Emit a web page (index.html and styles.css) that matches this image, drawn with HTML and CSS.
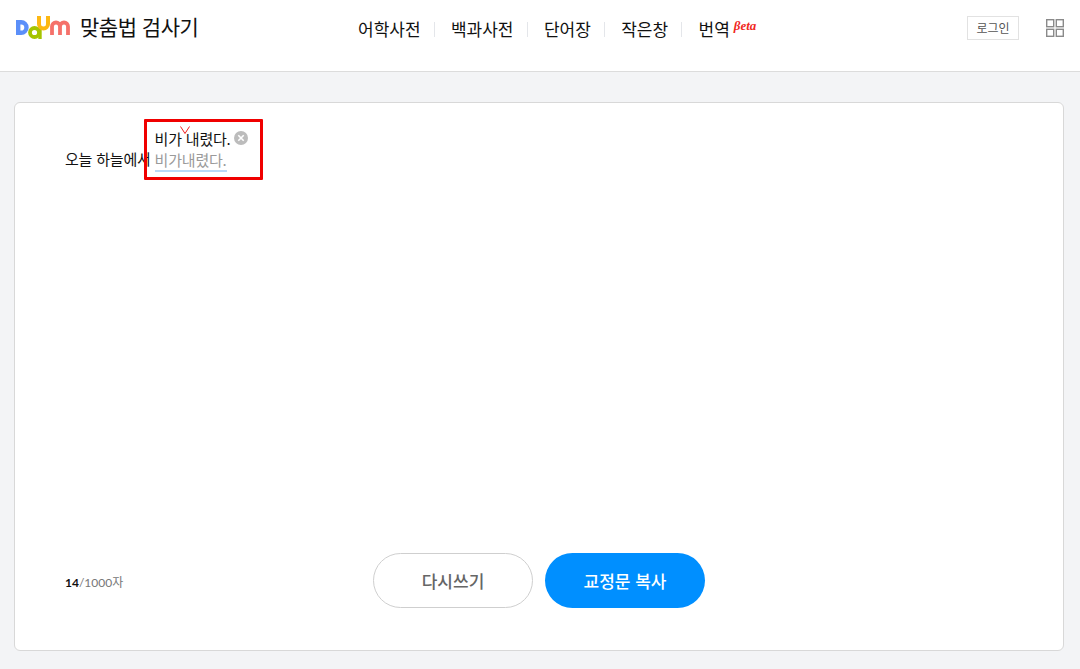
FILE: index.html
```html
<!DOCTYPE html>
<html lang="ko">
<head>
    <meta charset="UTF-8">
    <title>맞춤법 검사기</title>
    <link rel="stylesheet" href="styles.css">
</head>
<body>
    <header class="header">
        <div class="brand">
            <svg class="logo" width="56" height="26" viewBox="0 0 56 26" fill="none">
                <path d="M2.2 8.2h3a5.3 5.3 0 0 1 0 10.6h-3z" stroke="#5b8ff9" stroke-width="4.4"/>
                <circle cx="18.5" cy="18.5" r="4.5" stroke="#a5c400" stroke-width="3.8"/>
                <path d="M24 13v12" stroke="#a5c400" stroke-width="3.4"/>
                <path d="M23 2v8a4.5 4.5 0 0 0 9 0V2" stroke="#fdb813" stroke-width="4"/>
                <path d="M36 21V12.5a4 4 0 0 1 8 0V21M44 12.5a4 4 0 0 1 8 0V21" stroke="#f5716a" stroke-width="3.8"/>
            </svg>
            <h1 class="brand-title">맞춤법 검사기</h1>
        </div>
        <nav class="nav">
            <a class="nav-item">어학사전</a>
            <a class="nav-item">백과사전</a>
            <a class="nav-item">단어장</a>
            <a class="nav-item">작은창</a>
            <a class="nav-item">번역<em class="beta">βeta</em></a>
        </nav>
        <div class="util">
            <a class="login">로그인</a>
            <svg class="apps" width="18" height="18" viewBox="0 0 18 18" fill="none" stroke="#8a8a8a" stroke-width="1.4">
                <rect x="0.7" y="0.7" width="7" height="7"/>
                <rect x="10.3" y="0.7" width="7" height="7"/>
                <rect x="0.7" y="10.3" width="7" height="7"/>
                <rect x="10.3" y="10.3" width="7" height="7"/>
            </svg>
        </div>
    </header>

    <main class="main">
        <section class="card">
            <div class="result">
                <span class="plain">오늘 하늘에서</span>
                <div class="correction">
                    <div class="fixed">
                        <span>비가 내렸다.</span>
                        <svg class="clear" width="14" height="14" viewBox="0 0 14 14">
                            <circle cx="7" cy="7" r="7" fill="#bcbcbc"/>
                            <path d="M4.3 4.3l5.4 5.4M9.7 4.3L4.3 9.7" stroke="#fff" stroke-width="1.6"/>
                        </svg>
                    </div>
                    <div class="original">비가내렸다.</div>
                    <svg class="caret" width="10" height="8" viewBox="0 0 10 8" fill="none">
                        <path d="M0.5 0.5L5 7.5L9.5 0.5" stroke="#f01e1e"/>
                    </svg>
                    <div class="highlight"></div>
                </div>
            </div>
            <div class="card-foot">
                <div class="count"><b>14</b>/1000자</div>
                <div class="actions">
                    <button class="btn btn-reset">다시쓰기</button>
                    <button class="btn btn-copy">교정문 복사</button>
                </div>
            </div>
        </section>
    </main>
</body>
</html>
```

FILE: styles.css
```css
* {
    box-sizing: border-box;
}
body {
    margin: 0;
    height: 669px;
    overflow: hidden;
    background-color: #f3f4f6;
    color: #111;
    font-family: "Noto Sans CJK KR", "Noto Sans", sans-serif;
}
.header {
    display: flex;
    justify-content: space-between;
    height: 72px;
    padding: 0 16px;
    background-color: #fff;
    border-bottom: 1px solid #dcdcdc;
}
.brand {
    display: flex;
    align-items: flex-start;
    padding-top: 14px;
    width: 342px;
}
.logo {
    margin-right: 8px;
}
.brand-title {
    margin: -2px 0 0;
    font-size: 21px;
    line-height: 28px;
    font-weight: 400;
    letter-spacing: -0.5px;
}
.nav {
    display: flex;
    align-items: flex-start;
    padding-top: 17px;
    flex: 1;
}
.nav-item {
    display: flex;
    font-size: 17px;
    line-height: 24px;
    padding-right: 14px;
    margin-right: 16.4px;
    background: linear-gradient(#e4e6ea, #e4e6ea) right 5px / 1px 15px no-repeat;
}
.nav-item:last-child {
    background: none;
    margin-right: 0;
}
.beta {
    margin: -3px 0 0 4px;
    color: #f0281e;
    font-family: "Liberation Serif", serif;
    font-size: 13px;
    font-weight: 700;
    font-style: italic;
}
.util {
    display: flex;
    align-items: flex-start;
    padding-top: 16px;
    gap: 27px;
}
.login {
    width: 52px;
    height: 24px;
    border: 1px solid #e2e2e2;
    color: #555;
    font-size: 12px;
    line-height: 22px;
    text-align: center;
}
.apps {
    margin-top: 3px;
}
.main {
    padding: 30px 16px 18px 14px;
}
.card {
    display: flex;
    flex-direction: column;
    justify-content: space-between;
    height: 549px;
    padding: 25px 50px 42px;
    background-color: #fff;
    border: 1px solid #d8d8d8;
    border-radius: 6px;
}
.result {
    display: flex;
    align-items: flex-end;
    gap: 4px;
    font-size: 15px;
    line-height: 21px;
    letter-spacing: -0.2px;
}
.plain {
    margin-bottom: 3px;
}
.correction {
    position: relative;
}
/* red frame from the reference */
.correction::after {
    content: "";
    position: absolute;
    left: -11px;
    top: -9px;
    width: 119px;
    height: 61px;
    border: 3px solid #f00000;
    border-radius: 1px;
    box-sizing: border-box;
}
.fixed {
    display: flex;
    align-items: center;
    gap: 3px;
    white-space: nowrap;
}
.clear {
    margin-top: -2px;
}
.original {
    color: #9a9a9a;
    width: 72px;
    white-space: nowrap;
}
.highlight {
    width: 72px;
    height: 2px;
    background-color: #b9d9f7;
}
.caret {
    position: absolute;
    left: 25px;
    top: -2px;
}
.card-foot {
    position: relative;
    display: flex;
    align-items: center;
    justify-content: center;
}
.count {
    position: absolute;
    left: 0;
    top: 20px;
    font-size: 12px;
    color: #777;
    font-family: "Lato", "Noto Sans CJK KR", sans-serif;
}
.count b {
    color: #111;
    font-weight: 700;
}
.actions {
    display: flex;
    gap: 12px;
}
.btn {
    width: 160px;
    height: 55px;
    border-radius: 28px;
    font-family: inherit;
    font-size: 17px;
    font-weight: 500;
}
.btn-reset {
    background-color: #fff;
    border: 1px solid #cfcfcf;
    color: #666;
}
.btn-copy {
    background-color: #008fff;
    border: none;
    color: #fff;
}
```
